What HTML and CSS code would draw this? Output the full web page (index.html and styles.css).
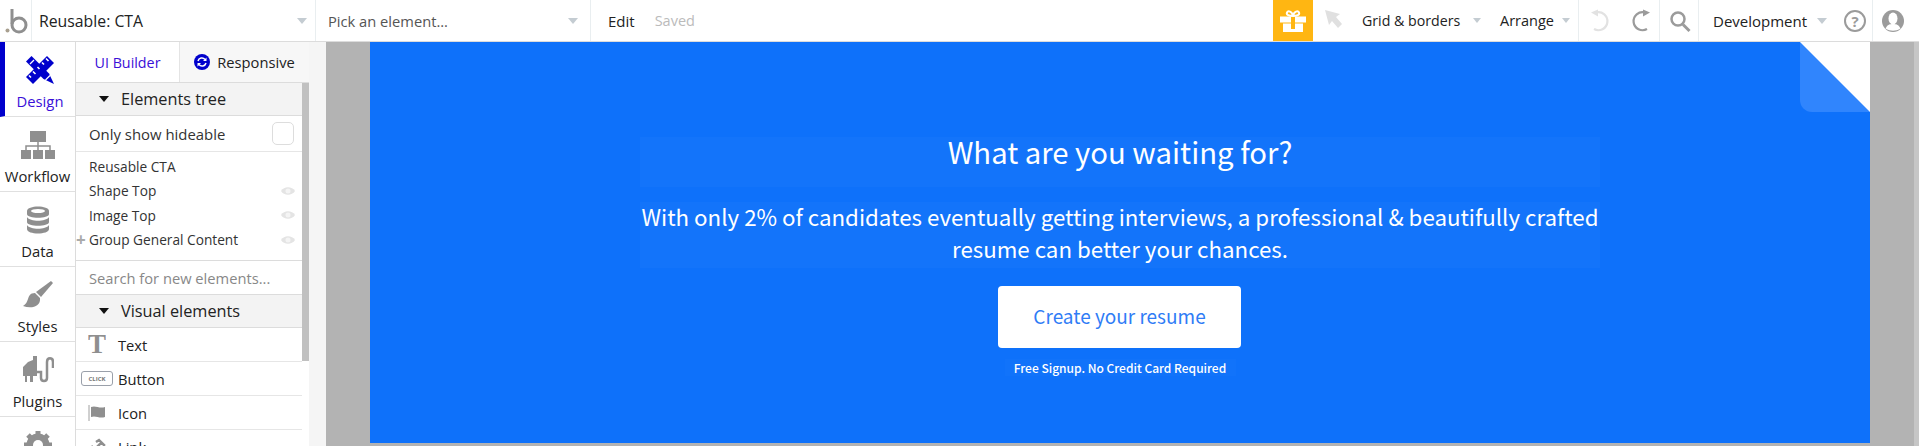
FILE: index.html
```html
<!DOCTYPE html>
<html lang="en">
<head>
<meta charset="utf-8">
<title>Bubble editor</title>
<link rel="stylesheet" href="styles.css">
</head>
<body>
<header class="topbar">
  <div class="logo"><svg width="30" height="30" viewBox="0 0 30 30"><circle cx="6.500" cy="24.500" r="2" fill="#a89f8f"/><path d="M11 3v15" stroke="#8f8f8f" stroke-width="3" fill="none"/><circle cx="18" cy="19" r="7" stroke="#8f8f8f" stroke-width="3" fill="none"/></svg></div>
  <div class="picker picker-page"><span class="picker-label label-page">Reusable: CTA</span><i class="caret caret-big"></i></div>
  <div class="picker picker-el"><span class="picker-label muted">Pick an element...</span><i class="caret caret-big"></i></div>
  <div class="editsave"><span class="edit">Edit</span><span class="saved">Saved</span></div>
  <div class="tools">
    <div class="gift"><svg width="26" height="22" viewBox="0 0 26 22"><path d="M0 6.500h26v6H0zM3 13.500h20V22H3z" fill="#fff"/><path d="M11 6.500h4V19h-4z" fill="#ffb612"/><path d="M13 6C9 6 6 5 7 2.500 8 .5 12 1 13 6zm0 0c4 0 7-1 6-3.500C18 .5 14 1 13 6z" fill="none" stroke="#fff" stroke-width="2"/></svg></div>
    <svg class="cursor" width="20" height="20" viewBox="0 0 20 20"><path d="M2 1l15 4-4 3 6 7-4 4-6-7-3 4z" fill="#e0e0e0"/></svg>
    <span class="menu menu-grid">Grid &amp; borders</span><i class="caret"></i>
    <span class="menu menu-arrange">Arrange</span><i class="caret"></i>
    <div class="sep sep-undo"></div>
    <svg class="undo" width="22" height="24" viewBox="0 0 22 24"><path d="M6 3.500A9 9 0 1 1 4 20" fill="none" stroke="#e2e2e2" stroke-width="2.200"/><path d="M1 3.500l7-3v7z" fill="#e2e2e2"/></svg>
    <svg class="redo" width="22" height="24" viewBox="0 0 22 24"><path d="M16 3.500A9 9 0 1 0 18 20" fill="none" stroke="#9b9b9b" stroke-width="2.200"/><path d="M21 3.500l-7-3v7z" fill="#9b9b9b"/></svg>
    <div class="sep sep-redo"></div>
    <svg class="search" width="22" height="24" viewBox="0 0 22 24"><circle cx="9" cy="10" r="6.500" fill="none" stroke="#9b9b9b" stroke-width="2.500"/><path d="M14 15.500l6.500 6.500" stroke="#9b9b9b" stroke-width="3"/></svg>
    <div class="sep sep-search"></div>
    <span class="menu menu-dev">Development</span><i class="caret caret-big"></i>
    <svg class="help" width="24" height="26" viewBox="0 0 24 26"><circle cx="11" cy="13" r="10" fill="none" stroke="#9b9b9b" stroke-width="2"/><text x="11" y="19" class="help-q">?</text></svg>
    <div class="sep sep-help"></div>
    <svg class="user" width="23" height="26" viewBox="0 0 23 26"><circle cx="11" cy="13" r="11" fill="#9b9b9b"/><ellipse cx="11" cy="10.500" rx="4.500" ry="6" fill="#fff"/><path d="M3.500 20.500c2-4 4.500-4.500 7.500-4.500s5.500.5 7.500 4.500c-4.500 3-10.500 3-15 0z" fill="#fff"/></svg>
  </div>
</header>
<div class="main">
  <nav class="sidebar">
    <div class="nav-item active">
      <svg width="28" height="28" viewBox="0 0 28 28"><path d="M0 5.500L5.500 0l17.500 17.500 5 10.500-10.500-5z" fill="#0000cc"/><path d="M0 21L21 0l7 7L7 28z" fill="#0000cc"/><path d="M20 2.500l2.500 2.500M16 6.500l2 2M11.500 11l2 2M7 15.500l2.500 2.500M3 19.500l2 2" stroke="#fff" stroke-width="1.600"/><path d="M4 8L8 4" stroke="#fff" stroke-width="1.200"/><path d="M19.500 24l4.500-4.500" stroke="#fff" stroke-width="1.200"/></svg>
      <span>Design</span>
    </div>
    <div class="nav-item">
      <svg width="34" height="28" viewBox="0 0 34 28"><path d="M9 0h16v11H9zM0 19h10v9H0zM12 19h10v9H12zM24 19h10v9H24z" fill="#8f8f8f"/><path d="M17 11v8M5 19v-4h24v4" stroke="#8f8f8f" stroke-width="1.500" fill="none"/></svg>
      <span>Workflow</span>
    </div>
    <div class="nav-item">
      <svg width="22" height="28" viewBox="0 0 22 28"><g fill="#8f8f8f"><path d="M0 5c0-6 22-6 22 0v3c0 5-22 5-22 0z"/><path d="M0 11c3 5 19 5 22 0v5c0 5-22 5-22 0zM0 19c3 5 19 5 22 0v4c0 6-22 6-22 0z"/></g><ellipse cx="11" cy="5" rx="7" ry="2" fill="#fff"/></svg>
      <span>Data</span>
    </div>
    <div class="nav-item">
      <svg width="30" height="28" viewBox="0 0 30 28"><path d="M28 0L13 11l5 5L30 2z" fill="#8f8f8f"/><path d="M12 12c-5 0-6 3-7 6-1 3-2 5-5 7 8 3 18 1 17-8z" fill="#8f8f8f"/></svg>
      <span>Styles</span>
    </div>
    <div class="nav-item">
      <svg width="32" height="28" viewBox="0 0 32 28"><path d="M1 11l5-5 5-2V0h4v20h-4v6H8v-6H5v6H3v-6H1z" fill="#8f8f8f"/><path d="M15 16h4v6c0 4 6 4 6 0V6c0-5 6-5 6 0v6" fill="none" stroke="#8f8f8f" stroke-width="2.500"/></svg>
      <span>Plugins</span>
    </div>
    <div class="nav-item">
      <svg width="28" height="28" viewBox="0 0 28 28"><circle cx="14" cy="14" r="8" fill="none" stroke="#8f8f8f" stroke-width="7"/><path d="M14 0v28M0 14h28M4 4l20 20M24 4L4 24" stroke="#8f8f8f" stroke-width="5"/><circle cx="14" cy="14" r="5" fill="#fff"/></svg>
    </div>
  </nav>
  <aside class="panel">
    <div class="tabs">
      <div class="tab tab-on">UI Builder</div>
      <div class="tab tab-off"><svg width="16" height="16" viewBox="0 0 16 16"><circle cx="8" cy="8" r="8" fill="#0000cc"/><path d="M4 7a4 4 0 0 1 7-1.500M12 9a4 4 0 0 1-7 1.500" stroke="#fff" stroke-width="1.500" fill="none"/><path d="M12.500 3.500v3.500H9zM3.500 12.500V9H7z" fill="#fff"/></svg><span>Responsive</span></div>
    </div>
    <div class="panel-body">
      <div class="panel-scroll">
        <div class="sec-head"><i class="tri"></i>Elements tree</div>
        <div class="hideable"><span>Only show hideable</span><i class="check"></i></div>
        <ul class="tree">
          <li class="tree-row"><span>Reusable CTA</span></li>
          <li class="tree-row"><span>Shape Top</span><svg class="eye" width="14" height="10" viewBox="0 0 14 10"><use href="#eye"/></svg></li>
          <li class="tree-row"><span>Image Top</span><svg class="eye" width="14" height="10" viewBox="0 0 14 10"><use href="#eye"/></svg></li>
          <li class="tree-row"><b class="plus">+</b><span>Group General Content</span><svg class="eye" width="14" height="10" viewBox="0 0 14 10"><use href="#eye"/></svg></li>
        </ul>
        <div class="search-row">Search for new elements...</div>
        <div class="sec-head sec-visual"><i class="tri"></i>Visual elements</div>
        <div class="el-row"><span class="el-icon"><svg width="18" height="20" viewBox="0 0 18 20"><text x="9" y="18" class="t-glyph">T</text></svg></span>Text</div>
        <div class="el-row"><span class="el-icon"><span class="click">CLICK</span></span>Button</div>
        <div class="el-row"><span class="el-icon"><svg width="18" height="16" viewBox="0 0 18 16"><path d="M1 0v16" stroke="#a0a0a0"/><path d="M3 2c5-2 8 2 14 0v10c-6 2-9-2-14 0z" fill="#8f8f8f"/></svg></span>Icon</div>
        <div class="el-row"><span class="el-icon"><svg width="18" height="18" viewBox="0 0 18 18"><path d="M4 14l10-10M8 4l3-2 5 5-3 3M10 14l-3 2-5-5 3-3" stroke="#8f8f8f" stroke-width="2.500" fill="none"/></svg></span>Link</div>
      </div>
      <div class="scrollbar"></div>
    </div>
  </aside>
  <div class="gutter"></div>
  <main class="canvas">
    <section class="page">
      <div class="fold"></div>
      <h1 class="title">What are you waiting for?</h1>
      <p class="lead"><span class="lead-text">With only 2% of candidates eventually getting interviews, a professional &amp; beautifully crafted resume can better your chances.</span></p>
      <a class="cta">Create your resume</a>
      <p class="note">Free Signup. No Credit Card Required</p>
    </section>
    <div class="edge"></div>
  </main>
</div>
<svg class="defs" width="0" height="0"><defs><g id="eye"><path d="M0 5c3-5 11-5 14 0-3 5-11 5-14 0z" fill="#e4e4e4"/><circle cx="7" cy="5" r="2.500" fill="#f4f4f4"/></g></defs></svg>
</body>
</html>
```
FILE: styles.css
```css
* { box-sizing: border-box; }
html, body { margin: 0; height: 446px; overflow: hidden; }
body { font-family: "Open Sans", sans-serif; color: #222; background: #fff; font-size: 14px; }
.defs { position: absolute; }

.topbar { height: 42px; display: flex; align-items: center; border-bottom: 1px solid #dcdcdc; background: #fff; }
.logo { width: 32px; height: 41px; border-right: 1px solid #e9eef0; display: flex; align-items: center; justify-content: center; }
.picker { height: 41px; display: flex; align-items: center; justify-content: space-between; border-right: 1px solid #e9eef0; }
.picker-page { width: 284px; padding: 0 8px 0 7px; }
.picker-el { width: 275px; padding: 0 12px; }
.picker-label { font-size: 14.700px; }
.label-page { font-size: 15.800px; }
.muted { color: #555; }
.caret { width: 0; height: 0; border-left: 4.500px solid transparent; border-right: 4.500px solid transparent; border-top: 5px solid #c4ccd2; display: block; flex: none; }
.caret-big { border-left-width: 5.500px; border-right-width: 5.500px; border-top-width: 6px; }
.editsave { width: 682px; padding-left: 17px; display: flex; gap: 20px; font-size: 15px; }
.edit { color: #222; }
.saved { color: #bbb; font-size: 14.500px; }
.tools { flex: 1; height: 41px; display: flex; align-items: center; }
.gift { width: 40px; height: 41px; background: #ffb612; display: flex; align-items: center; justify-content: center; flex: none; }
.tools svg { flex: none; }
.cursor { margin-left: 10px; margin-top: -3px; }
.menu { font-size: 14.500px; color: #222; white-space: nowrap; flex: none; }
.menu-grid { width: 103px; margin-left: 19px; margin-right: 8px; font-size: 14.200px; }
.menu-arrange { width: 55px; margin-left: 19px; margin-right: 7px; }
.menu-dev { width: 94px; margin-left: 14px; margin-right: 10px; font-size: 15px; }
.sep { width: 1px; height: 41px; background: #e9eef0; flex: none; }
.sep-undo { margin-left: 8px; }
.undo { margin-left: 11px; }
.redo { margin-left: 17px; }
.sep-redo { margin-left: 8px; }
.search { margin-left: 9px; }
.sep-search { margin-left: 7px; }
.help { margin-left: 17px; }
.help-q { font: 700 15px "Open Sans", sans-serif; fill: #9b9b9b; text-anchor: middle; }
.sep-help { margin-left: 4px; }
.user { margin-left: 9px; }

.main { display: flex; height: 404px; }
.sidebar { width: 76px; flex: none; background: #fff; border-right: 1px solid #dcdcdc; overflow: hidden; }
.nav-item { height: 75px; display: flex; flex-direction: column; align-items: center; padding-top: 14px; border-bottom: 1px solid #e0e0e0; gap: 6.500px; font-size: 14.800px; line-height: 20px; color: #222; }
.nav-item svg { flex: none; display: block; }
.nav-item.active { border-left: 5px solid #0000cc; color: #3a10d8; }

.panel { width: 233px; flex: none; display: flex; flex-direction: column; overflow: hidden; }
.tabs { height: 41px; flex: none; display: flex; border-bottom: 1px solid #dcdcdc; }
.tab { display: flex; align-items: center; justify-content: center; font-size: 14.700px; }
.tab-on { width: 103px; color: #3a10d8; font-size: 14.300px; }
.tab-off { flex: 1; background: #f7f7f7; border-left: 1px solid #e4e4e4; gap: 7px; }
.panel-body { flex: 1; display: flex; overflow: hidden; }
.panel-scroll { width: 226px; flex: none; }
.scrollbar { width: 7px; height: 278px; background: #c0c0c0; }
.sec-head { height: 33px; background: #f3f3f3; border-bottom: 1px solid #dcdcdc; display: flex; align-items: center; padding-left: 23px; font-size: 16.300px; color: #222; }
.tri { width: 0; height: 0; border-left: 5.500px solid transparent; border-right: 5.500px solid transparent; border-top: 6px solid #111; margin-right: 12px; }
.hideable { height: 36px; display: flex; align-items: center; justify-content: space-between; padding: 0 8px 0 13px; border-bottom: 1px solid #e6e6e6; font-size: 14.900px; color: #333; }
.check { width: 22px; height: 23px; border: 1px solid #ddd; border-radius: 5px; }
.tree { list-style: none; margin: 0; padding: 2px 0 0; height: 109px; border-bottom: 1px solid #dcdcdc; }
.tree-row { height: 24.500px; display: flex; align-items: center; padding: 0 7px 0 13px; position: relative; font-size: 13.700px; color: #333; }
.tree-row span { flex: 1; }
.plus { position: absolute; left: 0; color: #aaa; font-size: 17px; font-weight: 700; }
.search-row { height: 34px; border-bottom: 1px solid #dcdcdc; display: flex; align-items: center; padding-left: 13px; font-size: 14.700px; color: #888; }
.el-row { height: 34px; border-bottom: 1px solid #e6e6e6; display: flex; align-items: center; font-size: 14.700px; color: #222; }
.el-icon { width: 42px; flex: none; display: flex; justify-content: center; }
.t-glyph { font: 700 27px "Liberation Serif", serif; fill: #8f8f8f; text-anchor: middle; }
.click { width: 32px; height: 15px; border: 1px solid #9aa0aa; border-radius: 3px; font-size: 6px; font-weight: 700; color: #777; display: flex; align-items: center; justify-content: center; }

.gutter { width: 17px; flex: none; background: #f5f5f5; }
.canvas { flex: 1; min-width: 0; background: #b3b3b3; padding: 0 0 0 44px; display: flex; justify-content: space-between; height: 404px; }
.edge { width: 5px; height: 404px; background: #c6c6c6; }
.page { width: 1500px; height: 401px; background: #0e71fa; color: #fff; position: relative; display: flex; flex-direction: column; align-items: center; padding-top: 95px; font-family: "Noto Sans CJK SC", sans-serif; }
.fold { position: absolute; top: 0; right: 0; width: 70px; height: 70px; background: #3085fd; border-bottom-left-radius: 12px; }
.fold::after { content: ""; position: absolute; inset: 0; background: #fff; clip-path: polygon(0 0, 100% 0, 100% 100%); }
.title { margin: 0; width: 960px; height: 50px; background: rgba(255, 255, 255, .025); font-size: 29.300px; font-weight: 400; line-height: 28px; text-align: center; }
.lead { margin: 15px 0 0; width: 960px; height: 66px; display: flow-root; background: rgba(255, 255, 255, .025); font-size: 22.300px; line-height: 32px; text-align: center; }
.lead-text { display: block; margin-top: -2px; }
.cta { margin: 18px 1px 0 0; width: 243px; height: 62px; padding-bottom: 3px; background: #fff; color: #2f7cf6; border-radius: 4px; display: flex; align-items: center; justify-content: center; font-size: 19px; }
.note { margin: 11px 0 0; width: 231px; height: 17px; background: rgba(255, 255, 255, .015); font-size: 12px; line-height: 17px; text-align: center; font-weight: 500; white-space: nowrap; }
```
